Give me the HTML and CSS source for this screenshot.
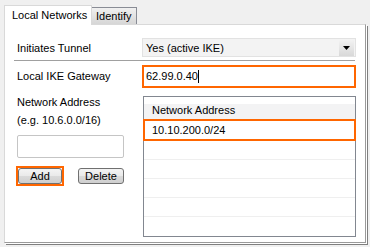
FILE: index.html
```html
<!DOCTYPE html>
<html>
<head>
<meta charset="utf-8">
<link rel="stylesheet" href="styles.css">
</head>
<body>
<div class="tabs">
  <div class="tab active">Local Networks</div>
  <div class="tab">Identify</div>
</div>
<div class="panel">
  <div class="row r1">
    <div class="label">Initiates Tunnel</div>
    <div class="combo">
      <span class="combo-text">Yes (active IKE)</span>
      <span class="drop"><svg width="7" height="4" viewBox="0 0 7 4"><path d="M0 0H7L3.5 4Z" fill="#000"/></svg></span>
    </div>
  </div>
  <div class="sep"></div>
  <div class="row r2">
    <div class="label">Local IKE Gateway</div>
    <div class="field">62.99.0.40<span class="caret"></span></div>
  </div>
  <div class="main">
    <div class="left">
      <div class="label ln">Network Address</div>
      <div class="label ln">(e.g. 10.6.0.0/16)</div>
      <div class="input"></div>
      <div class="buttons">
        <div class="ring"><div class="btn add">Add</div></div>
        <div class="btn del">Delete</div>
      </div>
    </div>
    <div class="list">
      <div class="lhead">Network Address</div>
      <div class="lrow sel">10.10.200.0/24</div>
      <div class="lrow"></div>
      <div class="lrow"></div>
      <div class="lrow"></div>
      <div class="lrow"></div>
    </div>
  </div>
</div>
</body>
</html>
```
FILE: styles.css
```css
html, body {
  margin: 0;
  background: #f0f0f0;
}
body {
  width: 370px;
  height: 247px;
  overflow: hidden;
  font-family: "Liberation Sans", Arial, sans-serif;
  font-size: 11px;
  color: #000;
}
.tabs {
  display: flex;
  align-items: flex-end;
  height: 24px;
  padding-left: 4px;
}
.tab {
  box-sizing: border-box;
  height: 17px;
  width: 45px;
  border: 1px solid #898c95;
  border-bottom: 0;
  border-left: 0;
  background: linear-gradient(#f0f0f0, #d6d6d6);
  padding-left: 4px;
  line-height: 17px;
}
.tab.active {
  position: relative;
  z-index: 1;
  height: 20px;
  width: 88px;
  margin-bottom: -1px;
  border: 1px solid #d9d9d9;
  border-bottom: 0;
  background: #fff;
  padding-left: 7px;
  line-height: 18px;
}
.panel {
  box-sizing: border-box;
  margin-left: 4px;
  width: 362px;
  height: 219px;
  background: #fff;
  border-top: 1px solid #d9d9d9;
  border-left: 1px solid #d9d9d9;
  border-right: 1px solid #9a9a9a;
  border-bottom: 1px solid #9a9a9a;
  box-shadow: 1px 1px 0 #fff, 2px 2px 0 #7f7f7f;
  padding: 13px 0 0 9px;
}
.row {
  display: flex;
}
.label {
  box-sizing: border-box;
  width: 128px;
  padding-left: 3px;
  white-space: nowrap;
}
.r1 {
  height: 20px;
}
.r1 .label {
  line-height: 20px;
}
.combo {
  box-sizing: border-box;
  width: 214px;
  height: 19px;
  border: 1px solid #e2e2e2;
  background: #f3f3f3;
  display: flex;
  align-items: center;
  justify-content: space-between;
  padding-left: 3px;
  padding-right: 1px;
}
.drop {
  width: 15px;
  height: 16px;
  background: linear-gradient(#f2f2f2, #d8d8d8);
  display: flex;
  align-items: center;
  justify-content: center;
}
.sep {
  margin-top: 2px;
  width: 341px;
  height: 1px;
  background: #a0a0a0;
  border-bottom: 1px solid #fff;
}
.r2 {
  margin-top: 3px;
  height: 23px;
}
.r2 .label {
  line-height: 23px;
}
.field {
  box-sizing: border-box;
  width: 214px;
  height: 23px;
  border: 2px solid #ff6600;
  padding-left: 2px;
  line-height: 19px;
  display: flex;
  align-items: center;
}
.caret {
  display: inline-block;
  width: 1px;
  height: 13px;
  background: #000;
}
.main {
  margin-top: 8px;
  display: flex;
}
.left {
  width: 129px;
  margin-top: -3px;
}
.ln {
  line-height: 18px;
}
.input {
  box-sizing: border-box;
  margin: 6px 0 0 3px;
  width: 107px;
  height: 23px;
  border: 1px solid #c5c5c5;
  border-radius: 2px;
  background: #fff;
}
.buttons {
  display: flex;
  margin-top: 8px;
  margin-left: 2px;
  align-items: flex-start;
}
.ring {
  box-sizing: border-box;
  width: 48px;
  height: 20px;
  border: 2px solid #ff6600;
}
.btn {
  box-sizing: border-box;
  height: 16px;
  border: 1px solid #707070;
  border-radius: 3px;
  background: linear-gradient(#f4f4f4 0%, #e9e9e9 50%, #dadada 51%, #cfcfcf 100%);
  text-align: center;
  line-height: 14px;
}
.add {
  width: 44px;
}
.del {
  width: 46px;
  margin: 2px 0 0 14px;
}
.list {
  box-sizing: border-box;
  width: 213px;
  height: 141px;
  border: 1px solid #828790;
  background: #fff;
}
.lhead {
  height: 22px;
  box-sizing: border-box;
  padding: 3px 0 0 8px;
  line-height: 20px;
  background: linear-gradient(#fff 0, #fff 30%, #f3f3f4 30%, #f3f3f4 100%);
}
.lrow {
  box-sizing: border-box;
  height: 19px;
  border-bottom: 1px solid #efefef;
}
.lrow.sel {
  height: 22px;
  border: 2px solid #ff6600;
  margin: 0 -1px;
  padding-left: 7px;
  line-height: 18px;
}
```
